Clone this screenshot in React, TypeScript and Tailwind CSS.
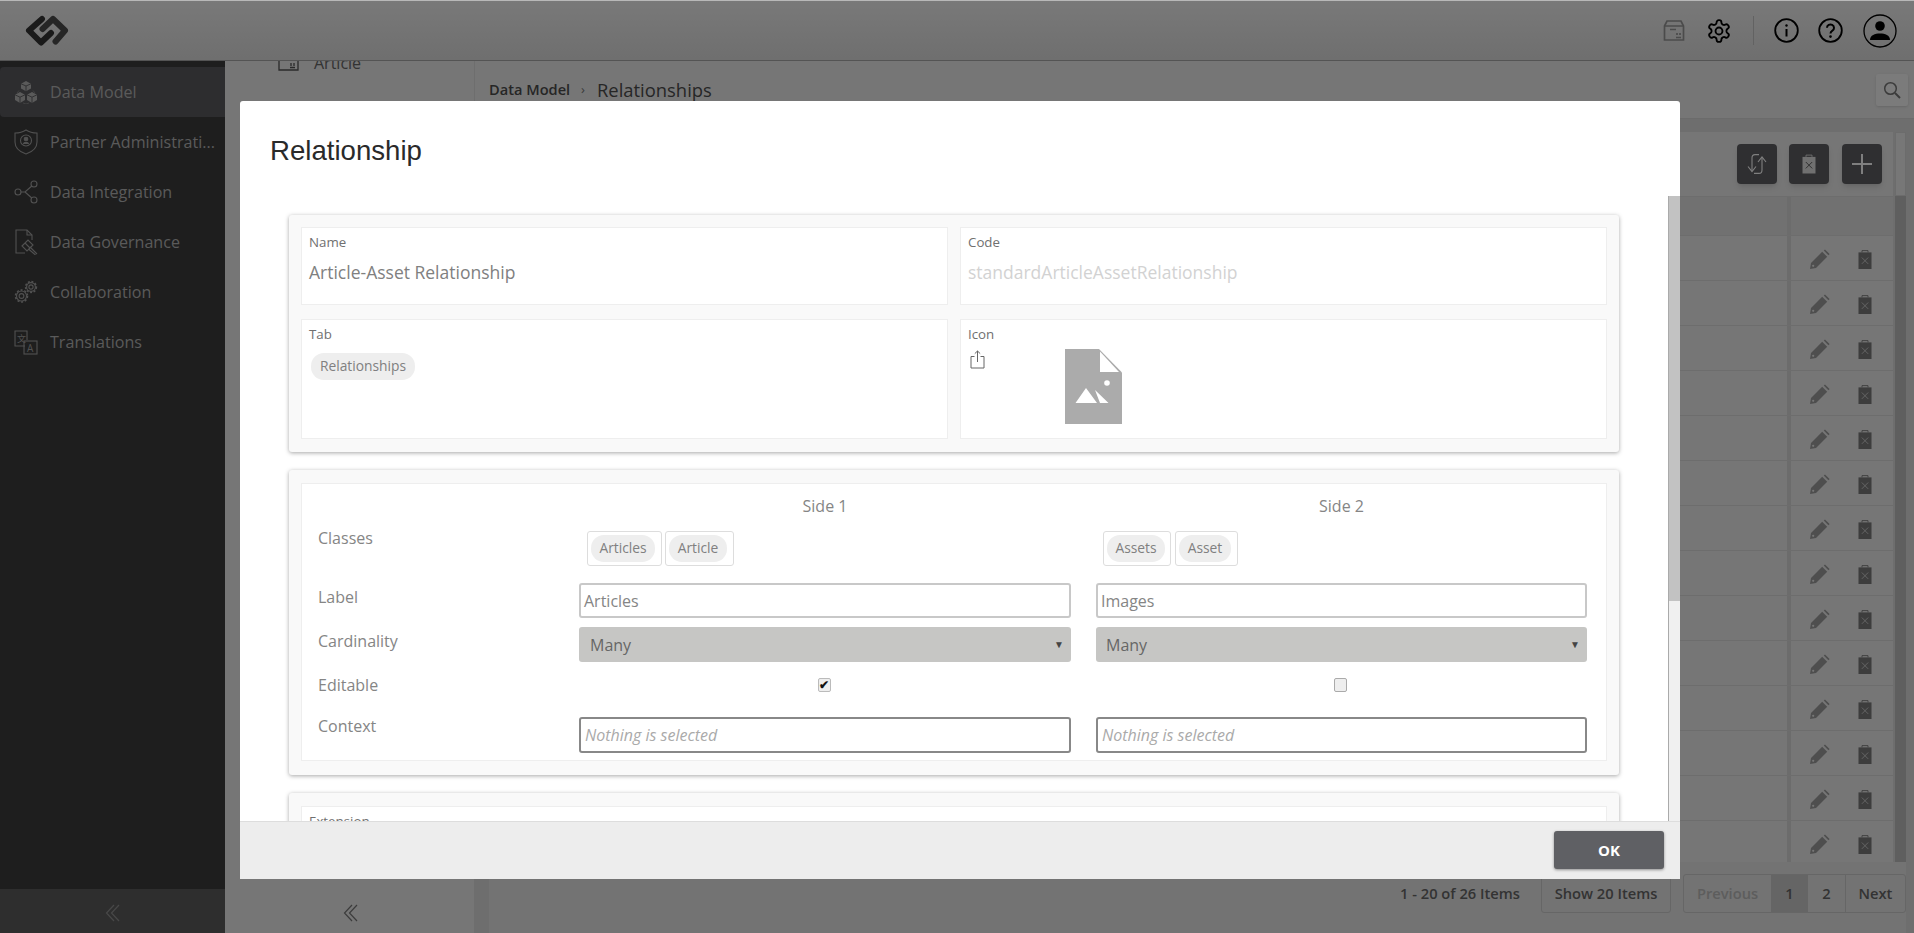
import React from "react";

const sans = "font-['Open_Sans',sans-serif]";

function LogoIcon() {
  return (
    <svg width="44" height="32" viewBox="0 0 44 32" fill="none" strokeWidth="6" strokeLinejoin="round" strokeLinecap="round">
      <path d="M17 4 L4 15.5 L16 27.5 L26 18" stroke="#353535" />
      <path d="M17.5 14 L28 4 L40 15.5 L30.5 26.5" stroke="#4c4c4c" />
    </svg>
  );
}

function PackageIcon() {
  return (
    <svg width="22" height="21" viewBox="0 0 22 21" fill="none" stroke="#969696" strokeWidth="1.7">
      <path d="M1.5 6 L4 1 H18 L20.5 6 V20 H1.5 Z" />
      <path d="M1.5 6 H20.5 M7 9.5 H13" />
      <path d="M14 15 V13 M17 15 V13 M13 17.5 H18" />
    </svg>
  );
}

function GearIcon() {
  return (
    <svg width="26" height="26" viewBox="0 0 24 24" fill="none" stroke="#000" strokeWidth="1.7" strokeLinejoin="round">
      <path d="M12.22 2h-.44a2 2 0 0 0-2 2v.18a2 2 0 0 1-1 1.73l-.43.25a2 2 0 0 1-2 0l-.15-.08a2 2 0 0 0-2.73.73l-.22.38a2 2 0 0 0 .73 2.73l.15.1a2 2 0 0 1 1 1.72v.51a2 2 0 0 1-1 1.74l-.15.09a2 2 0 0 0-.73 2.73l.22.38a2 2 0 0 0 2.73.73l.15-.08a2 2 0 0 1 2 0l.43.25a2 2 0 0 1 1 1.73V20a2 2 0 0 0 2 2h.44a2 2 0 0 0 2-2v-.18a2 2 0 0 1 1-1.73l.43-.25a2 2 0 0 1 2 0l.15.08a2 2 0 0 0 2.73-.73l.22-.39a2 2 0 0 0-.73-2.73l-.15-.08a2 2 0 0 1-1-1.74v-.5a2 2 0 0 1 1-1.74l.15-.09a2 2 0 0 0 .73-2.73l-.22-.38a2 2 0 0 0-2.73-.73l-.15.08a2 2 0 0 1-2 0l-.43-.25a2 2 0 0 1-1-1.73V4a2 2 0 0 0-2-2z" />
      <circle cx="12" cy="12" r="3.2" />
    </svg>
  );
}

function InfoIcon() {
  return (
    <svg width="25" height="25" viewBox="0 0 25 25" fill="none" stroke="#000" strokeWidth="1.8">
      <circle cx="12.5" cy="12.5" r="11.3" />
      <path d="M12.5 11 V18.5" strokeWidth="2" />
      <circle cx="12.5" cy="7.5" r="1.2" fill="#000" stroke="none" />
    </svg>
  );
}

function HelpIcon() {
  return (
    <svg width="25" height="25" viewBox="0 0 25 25" fill="none" stroke="#000" strokeWidth="1.8">
      <circle cx="12.5" cy="12.5" r="11.3" />
      <path d="M9 9.8 a3.5 3.3 0 1 1 5.4 2.8 c-1.3.8-1.9 1.4-1.9 2.8" strokeWidth="2" />
      <circle cx="12.5" cy="18.6" r="1.3" fill="#000" stroke="none" />
    </svg>
  );
}

function UserIcon() {
  return (
    <svg width="34" height="34" viewBox="0 0 34 34" fill="none">
      <circle cx="17" cy="17" r="16" stroke="#000" strokeWidth="1.3" />
      <circle cx="17" cy="12" r="4.8" fill="#000" />
      <path d="M7 26 C7 21 12 19.5 17 19.5 S27 21 27 26 Z" fill="#000" />
    </svg>
  );
}

const sideStroke = "#a2a2a2";

function ModelIcon() {
  return (
    <svg width="24" height="24" viewBox="0 0 24 24" fill="#b4b4b4">
      <path d="M12 1 L17 3.8 V8.5 L12 11.2 L7 8.5 V3.8 Z" />
      <path d="M6 12 L11 14.8 V20 L6 23 L1 20 V14.8 Z" />
      <path d="M18 12 L23 14.8 V20 L18 23 L13 20 V14.8 Z" />
      <path d="M12 6 V11.2 M7 3.8 L12 6 L17 3.8 M1 14.8 L6 17.2 L11 14.8 M6 17.2 V23 M13 14.8 L18 17.2 L23 14.8 M18 17.2 V23" stroke="#5a5a5e" strokeWidth="0.9" fill="none" />
      <path d="M5 10.5 L3 13 M19 10.5 L21 13 M9 23 L12 24 L15 23" stroke="#8c8c8c" strokeWidth="0.8" fill="none" />
    </svg>
  );
}

function ShieldIcon() {
  return (
    <svg width="24" height="26" viewBox="0 0 24 26" fill="none" stroke={sideStroke} strokeWidth="1.1">
      <path d="M12 1 C15 3 19 4 23 4 V13 C23 19 18 23 12 25 C6 23 1 19 1 13 V4 C5 4 9 3 12 1 Z" />
      <circle cx="12" cy="11.5" r="5.5" />
      <circle cx="12" cy="10" r="1.8" fill={sideStroke} />
      <path d="M9.3 15 C10 12.8 14 12.8 14.7 15" fill={sideStroke} />
    </svg>
  );
}

function NodesIcon() {
  return (
    <svg width="24" height="24" viewBox="0 0 24 24" fill="none" stroke={sideStroke} strokeWidth="1.1">
      <circle cx="4" cy="12" r="3" />
      <circle cx="20" cy="4" r="3" />
      <circle cx="20" cy="20" r="3" />
      <path d="M7 12 H11 L17.8 6 M11 12 L17.8 18" />
    </svg>
  );
}

function GavelDocIcon() {
  return (
    <svg width="24" height="26" viewBox="0 0 24 26" fill="none" stroke={sideStroke} strokeWidth="1.1">
      <path d="M11 24 H2 V1 H13 L18 6 V11" />
      <path d="M13 1 V6 H18" />
      <path d="M8 17 L14 11 L19 16 L13 22 Z" />
      <path d="M11 14 L16 19" />
      <path d="M16 18 L23 25 M14.5 20 L21.5 26" />
    </svg>
  );
}

function GearsIcon() {
  return (
    <svg width="24" height="24" viewBox="0 0 24 24" fill="none" stroke={sideStroke} strokeWidth="1.1">
      <circle cx="7.5" cy="16" r="2.4" />
      <circle cx="7.5" cy="16" r="5" />
      <circle cx="7.5" cy="16" r="6" strokeDasharray="2 1.8" strokeWidth="1.6" />
      <circle cx="17" cy="7" r="2.1" />
      <circle cx="17" cy="7" r="4.4" />
      <circle cx="17" cy="7" r="5.4" strokeDasharray="2 1.6" strokeWidth="1.6" />
    </svg>
  );
}

function TranslateIcon() {
  return (
    <svg width="24" height="25" viewBox="0 0 24 25" fill="none" stroke={sideStroke} strokeWidth="1.1">
      <path d="M11 16 H1 V1 H13 V10" />
      <rect x="10" y="11" width="13" height="13" />
      <text x="3" y="12" fontSize="9" fill={sideStroke} stroke="none" fontFamily="'Noto Sans CJK SC',sans-serif">文</text>
      <text x="13" y="22" fontSize="10" fill={sideStroke} stroke="none" fontFamily="'Open Sans',sans-serif">A</text>
    </svg>
  );
}

function DoubleChevron({ color }: { color: string }) {
  return (
    <svg width="15" height="18" viewBox="0 0 15 18" fill="none" stroke={color} strokeWidth="1.2">
      <path d="M9 1 L1.5 9 L9 17" />
      <path d="M14 1 L6.5 9 L14 17" />
    </svg>
  );
}

function ArticleIcon() {
  return (
    <svg width="21" height="22" viewBox="0 0 21 22" fill="none" stroke="#555" strokeWidth="1.3">
      <path d="M1 0 V18 H20 V0" />
      <path d="M13 14 V11 M16 14 V11 M12 15.5 H17" />
    </svg>
  );
}

function SearchIcon() {
  return (
    <svg width="18" height="18" viewBox="0 0 18 18" fill="none" stroke="#777" strokeWidth="1.5">
      <circle cx="7.5" cy="7.5" r="5.8" />
      <path d="M12 12 L17 17" strokeWidth="2" />
    </svg>
  );
}

function SwapIcon() {
  return (
    <svg width="20" height="20" viewBox="0 0 20 20" fill="none" stroke="#ffffff" strokeWidth="1.1">
      <path d="M12 0.6 H8 C6 0.6 5 2 5 4 V17" />
      <path d="M1 12.5 L5 17.5 L9 12.5" />
      <path d="M7 19.4 H12 C14 19.4 15 18 15 16 V3.5" />
      <path d="M11 8 L15 3 L19 8" />
    </svg>
  );
}

function TrashIcon({ w, h, body, mark }: { w: number; h: number; body: string; mark: string }) {
  return (
    <svg width={w} height={h} viewBox="0 0 14 19" fill="none">
      <path d="M0.5 2.4 H13.5 V19 H0.5 Z" fill={body} />
      <path d="M4 2.4 V0.6 H10 V2.4" stroke={body} strokeWidth="0.9" />
      <path d="M3.8 7.5 L10.2 13.9 M10.2 7.5 L3.8 13.9" stroke={mark} strokeWidth="0.9" />
    </svg>
  );
}

function PencilIcon() {
  return (
    <svg width="20" height="20" viewBox="0 0 20 20" fill="#9c9c9c">
      <path d="M12.2 2.8 L17.2 7.8 L6 19 L0 20 L1 14 Z" />
      <path d="M13.8 1.6 L15 0.4 L19.6 5 L18.4 6.2 Z" />
      <circle cx="3.2" cy="16.8" r="1.1" fill="#ececec" />
    </svg>
  );
}

function UploadIcon() {
  return (
    <svg width="15" height="19" viewBox="0 0 15 19" fill="none" stroke="#666" strokeWidth="1">
      <path d="M4.5 6.5 H1 V18 H14 V6.5 H10.5" />
      <path d="M7.5 12 V1 M4.8 3.6 L7.5 1 L10.2 3.6" />
    </svg>
  );
}

function FilePlaceholder() {
  return (
    <svg width="57" height="75" viewBox="0 0 57 75">
      <path d="M0 0 H34 L57 23.5 V75 H0 Z" fill="#ababab" />
      <path d="M35 2.5 V23 H54 Z" fill="#ffffff" />
      <path d="M10.5 54 L21 39 L32 54 Z M30 41 L43.5 54 H35 Z" fill="#ffffff" />
      <circle cx="42" cy="34" r="2.8" fill="#ffffff" />
    </svg>
  );
}

const navItems = [
  { label: "Data Model", icon: <ModelIcon />, active: true },
  { label: "Partner Administrati...", icon: <ShieldIcon /> },
  { label: "Data Integration", icon: <NodesIcon /> },
  { label: "Data Governance", icon: <GavelDocIcon /> },
  { label: "Collaboration", icon: <GearsIcon /> },
  { label: "Translations", icon: <TranslateIcon /> },
];

function Chip({ label, w }: { label: string; w: string }) {
  return (
    <span className={`flex h-[27px] items-center justify-center rounded-[13px] bg-[#eeeeee] text-[13.8px] text-[#808080] ${w}`}>
      {label}
    </span>
  );
}

function BoxChip({ label, box, chip }: { label: string; box: string; chip: string }) {
  return (
    <span className={`flex h-[35px] items-center rounded-[3px] border border-[#dddddd] pl-[3px] ${box}`}>
      <Chip label={label} w={chip} />
    </span>
  );
}

function Cell({ label, children, tall }: { label: string; children: React.ReactNode; tall?: boolean }) {
  return (
    <div className={`border border-[#eeeeee] bg-white px-[7px] pt-[4px] ${tall ? "h-[120px]" : "h-[78px]"}`}>
      <div className="text-[13.3px] leading-[20px] text-[#707070]">{label}</div>
      {children}
    </div>
  );
}

const fieldLabel = "text-[16px] leading-[20px] text-[#858585]";

export default function App() {
  return (
    <div className={`relative flex h-[933px] w-[1914px] flex-col overflow-hidden ${sans}`}>
      <header className="flex h-[61px] shrink-0 items-center border-t border-b border-t-[#b8b8b8] border-b-[#a8a8a8] bg-gradient-to-b from-[#f2f2f2] to-[#dedede] pl-[25px] pr-[17px]">
        <LogoIcon />
        <div className="ml-auto flex items-center">
          <PackageIcon />
          <span className="ml-[21px]"><GearIcon /></span>
          <span className="ml-[21px] h-[29px] w-px bg-[#c4c4c4]" />
          <span className="ml-[20px]"><InfoIcon /></span>
          <span className="ml-[19px]"><HelpIcon /></span>
          <span className="ml-[20px]"><UserIcon /></span>
        </div>
      </header>

      <div className="flex min-h-0 flex-1">
        <aside className="flex w-[225px] shrink-0 flex-col bg-[#3c3c3c] pt-[6px]">
          {navItems.map((n) => (
            <div key={n.label} className={`flex h-[50px] items-center pl-[14px] ${n.active ? "rounded-l-[4px] bg-[#5a5a5e]" : ""}`}>
              <span className="flex w-[24px] justify-center">{n.icon}</span>
              <span className="ml-[12px] whitespace-nowrap text-[16.1px] text-[#b4b4b4]">{n.label}</span>
            </div>
          ))}
          <div className="mt-auto flex h-[44px] items-center justify-center bg-[#5c5c5c] pt-[4px]">
            <DoubleChevron color="#909090" />
          </div>
        </aside>

        <div className="flex w-[250px] shrink-0 flex-col overflow-hidden border-r border-[#dcdcdc] bg-[#ececec]">
          <div className="-mt-[10px] flex h-[24px] items-center pl-[53px]">
            <ArticleIcon />
            <span className="ml-[15px] text-[16px] text-[#666666]">Article</span>
          </div>
          <div className="mt-auto flex h-[44px] items-center justify-center pl-[2px] pt-[3px]">
            <DoubleChevron color="#777777" />
          </div>
        </div>

        <main className="flex min-w-0 flex-1 flex-col bg-[#dcdcdc]">
          <div className="flex h-[58px] shrink-0 items-center border-b border-[#d6d6d6] bg-[#ececec] pl-[14px] pr-[6px]">
            <span className="text-[14.6px] font-semibold text-[#4c4c4c]">Data Model</span>
            <span className="ml-[11px] mr-[12px] text-[13px] text-[#777777]">›</span>
            <span className="text-[18.4px] font-medium text-[#4c4c4c]">Relationships</span>
            <span className="ml-auto flex h-[32px] w-[32px] items-center justify-center rounded-[2px] bg-[#f6f6f6] shadow-sm">
              <SearchIcon />
            </span>
          </div>
          <div className="flex min-h-0 flex-1 flex-col pl-[14px] pr-[8px] pt-[13px]">
            <div className="flex h-[730px] shrink-0">
              <div className="flex min-w-0 flex-1 flex-col overflow-hidden bg-[#ececec]">
                <div className="flex h-[64px] shrink-0 items-center justify-end gap-[12px] pr-[11px]">
                  <span className="flex h-[40px] w-[40px] items-center justify-center rounded-[4px] bg-[#5e5e62] shadow-md"><SwapIcon /></span>
                  <span className="flex h-[40px] w-[40px] items-center justify-center rounded-[4px] bg-[#5e5e62] shadow-md">
                    <TrashIcon w={14} h={20} body="#e0e0e0" mark="#555555" />
                  </span>
                  <span className="ml-[1px] flex h-[40px] w-[40px] items-center justify-center rounded-[4px] bg-[#5e5e62] shadow-md">
                    <span className="relative block h-[20px] w-[20px]">
                      <span className="absolute left-0 top-[9px] h-[1.5px] w-[20px] bg-white" />
                      <span className="absolute left-[9px] top-0 h-[20px] w-[1.5px] bg-white" />
                    </span>
                  </span>
                </div>
                <div className="flex h-[40px] shrink-0 border-y border-[#dadada] bg-[#e2e2e2]">
                  <div className="flex-1" />
                  <div className="w-[4px] bg-[#d8d8d8]" />
                  <div className="w-[102px]" />
                </div>
                {Array.from({ length: 14 }).map((_, i) => (
                  <div key={i} className="flex h-[45px] shrink-0 border-b border-[#dadada]">
                    <div className="flex-1" />
                    <div className="w-[4px] bg-[#d8d8d8]" />
                    <div className="flex w-[102px] items-center pl-[19px] pt-[2px]">
                      <PencilIcon />
                      <span className="ml-[28px]"><TrashIcon w={14} h={19} body="#7a7a7a" mark="#d0d0d0" /></span>
                    </div>
                  </div>
                ))}
              </div>
              <div className="ml-[2px] flex w-[11px] shrink-0 flex-col bg-[#bebebe]">
                <div className="h-[64px] border border-[#d8d8d8] bg-[#eeeeee]" />
              </div>
            </div>
            <div className="flex flex-1 items-start justify-end bg-[#e6e6e6] pt-[12px] text-[14.7px] font-semibold text-[#666666]">
              <span className="mr-[21px] flex h-[39px] items-center">1 - 20 of 26 Items</span>
              <span className="flex h-[39px] w-[130px] items-center justify-center rounded-[3px] border border-[#cccccc]">Show 20 Items</span>
              <div className="ml-[12px] flex h-[39px] w-[223px] overflow-hidden rounded-[3px] border border-[#cccccc]">
                <span className="flex w-[87px] items-center justify-center text-[#bbbbbb]">Previous</span>
                <span className="flex w-[37px] items-center justify-center bg-[#cacaca]">1</span>
                <span className="flex w-[38px] items-center justify-center border-r border-[#cccccc]">2</span>
                <span className="flex flex-1 items-center justify-center">Next</span>
              </div>
            </div>
          </div>
        </main>
      </div>

      <div className="absolute inset-x-0 bottom-0 top-px bg-black/50" />

      <div className="absolute left-[240px] top-[101px] flex h-[778px] w-[1440px] flex-col overflow-hidden rounded-t-[3px] bg-white">
        <div className="flex h-[95px] shrink-0 items-start pl-[30px] pt-[32px]">
          <h1 className="font-['Liberation_Sans',Arial,sans-serif] text-[27.6px] leading-[36px] text-[#2a2a2a]">Relationship</h1>
        </div>
        <div className="flex min-h-0 flex-1">
          <div className="flex min-w-0 flex-1 flex-col gap-[18px] overflow-hidden px-[49px] pt-[19px]">
            <section className="shrink-0 rounded-[3px] bg-[#f9f9f9] px-[12px] pb-[13px] pt-[12px] shadow-[0_1px_4px_rgba(0,0,0,0.35)]">
              <div className="grid grid-cols-2 gap-x-[12px] gap-y-[14px]">
                <Cell label="Name">
                  <div className="mt-[8px] text-[17.5px] leading-[24px] text-[#808080]">Article-Asset Relationship</div>
                </Cell>
                <Cell label="Code">
                  <div className="mt-[8px] text-[17.5px] leading-[24px] text-[#d2d2d2]">standardArticleAssetRelationship</div>
                </Cell>
                <Cell label="Tab" tall>
                  <div className="ml-[2px] mt-[9px]"><Chip label="Relationships" w="w-[104px]" /></div>
                </Cell>
                <Cell label="Icon" tall>
                  <div className="mt-[6px] flex items-start">
                    <span className="ml-[2px]"><UploadIcon /></span>
                    <span className="ml-[80px] -mt-[1px]"><FilePlaceholder /></span>
                  </div>
                </Cell>
              </div>
            </section>

            <section className="shrink-0 rounded-[3px] bg-[#f9f9f9] px-[12px] pb-[14px] pt-[13px] shadow-[0_1px_4px_rgba(0,0,0,0.35)]">
              <div className="grid h-[278px] grid-cols-[236px_492px_491px] grid-rows-[44px_55px_44px_35px_55px_36px] items-start gap-x-[25px] border border-[#eeeeee] bg-white pl-[16px] text-[#858585]">
                <span />
                <span className="self-center text-center text-[16px] leading-[20px]">Side 1</span>
                <span className="self-center text-center text-[16px] leading-[20px]">Side 2</span>

                <span className={fieldLabel}>Classes</span>
                <div className="ml-[8px] mt-[3px] flex gap-[3px]">
                  <BoxChip label="Articles" box="w-[75px]" chip="w-[64px]" />
                  <BoxChip label="Article" box="w-[69px]" chip="w-[58px]" />
                </div>
                <div className="ml-[7px] mt-[3px] flex gap-[4px]">
                  <BoxChip label="Assets" box="w-[68px]" chip="w-[58px]" />
                  <BoxChip label="Asset" box="w-[63px]" chip="w-[52px]" />
                </div>

                <span className={`mt-[4px] ${fieldLabel}`}>Label</span>
                <div className="flex h-[35px] items-center rounded-[3px] border-2 border-[#c8c8c8] pl-[3px] text-[16px]">Articles</div>
                <div className="flex h-[35px] items-center rounded-[3px] border-2 border-[#c8c8c8] pl-[3px] text-[16px]">Images</div>

                <span className={`mt-[4px] ${fieldLabel}`}>Cardinality</span>
                <div className="flex h-[35px] items-center justify-between rounded-[3px] bg-[#c6c6c4] pl-[11px] pr-[7px] text-[16px] text-[#666666]">
                  Many<span className="text-[10px] text-[#444444]">▼</span>
                </div>
                <div className="flex h-[35px] items-center justify-between rounded-[3px] bg-[#c6c6c4] pl-[10px] pr-[7px] text-[16px] text-[#666666]">
                  Many<span className="text-[10px] text-[#444444]">▼</span>
                </div>

                <span className={`mt-[13px] ${fieldLabel}`}>Editable</span>
                <div className="mt-[16px] flex justify-center pr-[2px]">
                  <span className="flex h-[14px] w-[13px] items-center justify-center rounded-[2px] border border-[#bbbbbb] bg-[#eeeeee] text-[12px] font-bold leading-none text-[#111111]">✔</span>
                </div>
                <div className="mt-[16px] flex justify-center pr-[3px]">
                  <span className="h-[14px] w-[13px] rounded-[2px] border border-[#aaaaaa] bg-[#eeeeee]" />
                </div>

                <span className={`-mt-[1px] ${fieldLabel}`}>Context</span>
                <div className="flex h-[36px] items-center rounded-[3px] border-2 border-[#888888] pl-[4px] text-[16px] italic text-[#aaaaaa]">Nothing is selected</div>
                <div className="flex h-[36px] items-center rounded-[3px] border-2 border-[#888888] pl-[4px] text-[16px] italic text-[#aaaaaa]">Nothing is selected</div>
              </div>
            </section>

            <section className="shrink-0 rounded-[3px] bg-[#f9f9f9] px-[12px] pb-[12px] pt-[13px] shadow-[0_1px_4px_rgba(0,0,0,0.35)]">
              <Cell label="Extension"><span /></Cell>
            </section>
          </div>
          <div className="flex w-[12px] shrink-0 flex-col border-l border-[#aaaaaa] bg-[#f0f0f0]">
            <div className="h-[405px] bg-[#c2c2c2]" />
          </div>
        </div>
        <footer className="flex h-[58px] shrink-0 items-start justify-end border-t border-[#dddddd] bg-[#ededed] pr-[16px] pt-[9px]">
          <button className="flex h-[38px] w-[110px] items-center justify-center rounded-[3px] bg-[#5f6064] text-[15px] font-bold text-white shadow-[0_1px_3px_rgba(0,0,0,0.4)]">OK</button>
        </footer>
      </div>
    </div>
  );
}
